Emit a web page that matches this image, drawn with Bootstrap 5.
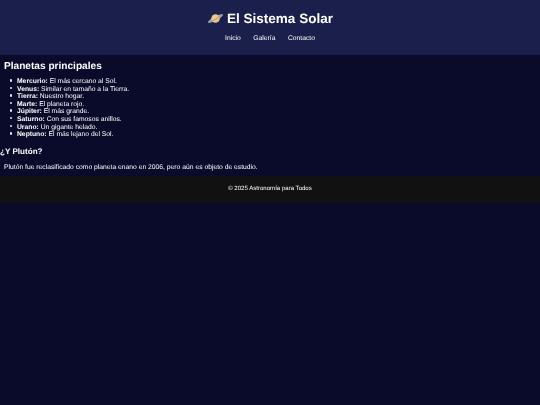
<!DOCTYPE html>
<html lang="es">
<head>
<meta charset="utf-8">
<title>El Sistema Solar</title>
<link href="https://cdn.jsdelivr.net/npm/bootstrap@5.3.0/dist/css/bootstrap.min.css" rel="stylesheet">
<style>
html,body{height:100%}
body{background:#0a0a2a;color:#fff;font-family:"Liberation Sans",Arial,sans-serif;font-size:6.75px;line-height:1.2;text-rendering:geometricPrecision}
.page-wrap{min-height:100%;filter:blur(.3px)}
.site-head{background:#1b1f4b;height:54.5px;padding-top:10px}
.site-title{font-size:13.5px;font-weight:700;line-height:17px;margin:0 0 7px}
.site-title svg{width:17px;height:15px;vertical-align:-2.5px;margin-right:3px}
.site-nav{gap:12.5px;font-size:6.75px;line-height:9px}
.site-nav a{color:#fff;text-decoration:none}
.sec-one{padding:6.5px 4px 0}
.sec-title{font-size:10.125px;font-weight:700;line-height:12px;margin:0 0 5px}
.planet-list{margin:0 0 8.5px;padding-left:13px;line-height:7.6px;font-size:6.75px;list-style:none}
.planet-list li::before{content:"";display:inline-block;width:2.4px;height:2.4px;border-radius:50%;background:#e8e8ee;margin-left:-7.2px;margin-right:4.8px;vertical-align:1.5px}
.planet-list strong{font-weight:700}
.sub-title{font-size:8.1px;font-weight:700;line-height:10px;margin:0 0 6px}
.sec-para{font-size:6.75px;line-height:9px;margin:0 0 4px;padding-left:4px}
.site-foot{background:#111;height:27px;font-size:6.075px}
</style>
</head>
<body>
<div class="page-wrap">
<header class="site-head text-center">
<h1 class="site-title"><svg viewBox="0 0 30 26" aria-hidden="true"><ellipse cx="15" cy="13" rx="15" ry="3.6" transform="rotate(-28 15 13)" fill="#8fa6b8"/><circle cx="15" cy="13" r="7.5" fill="#ecc48e"/><path d="M8.5 17c6-1 10-4 13-8" stroke="#c9a173" stroke-width="2" fill="none"/></svg>El Sistema Solar</h1>
<nav class="site-nav d-flex justify-content-center">
<a href="#">Inicio</a><a href="#">Galería</a><a href="#">Contacto</a>
</nav>
</header>
<main>
<section class="sec-one">
<h2 class="sec-title">Planetas principales</h2>
<ul class="planet-list">
<li><strong>Mercurio:</strong> El más cercano al Sol.</li>
<li><strong>Venus:</strong> Similar en tamaño a la Tierra.</li>
<li><strong>Tierra:</strong> Nuestro hogar.</li>
<li><strong>Marte:</strong> El planeta rojo.</li>
<li><strong>Júpiter:</strong> El más grande.</li>
<li><strong>Saturno:</strong> Con sus famosos anillos.</li>
<li><strong>Urano:</strong> Un gigante helado.</li>
<li><strong>Neptuno:</strong> El más lejano del Sol.</li>
</ul>
</section>
<h3 class="sub-title">¿Y Plutón?</h3>
<p class="sec-para">Plutón fue reclasificado como planeta enano en 2006, pero aún es objeto de estudio.</p>
</main>
<footer class="site-foot d-flex align-items-center justify-content-center">© 2025 Astronomía para Todos</footer>
</div>
<script src="https://cdn.jsdelivr.net/npm/bootstrap@5.3.0/dist/js/bootstrap.bundle.min.js"></script>
</body>
</html>
